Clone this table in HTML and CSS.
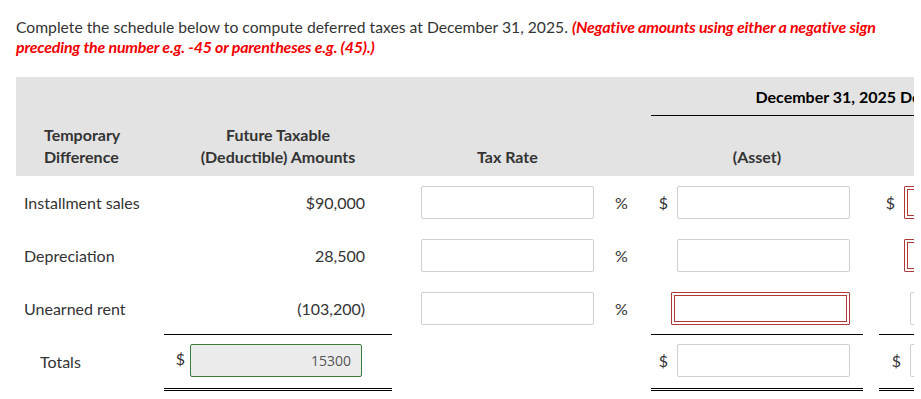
FILE: index.html
```html
<!DOCTYPE html>
<html>
<head>
<meta charset="utf-8">
<link rel="stylesheet" href="styles.css">
</head>
<body>
<div class="page">
  <p class="intro">Complete the schedule below to compute deferred taxes at December 31, 2025. <em class="note">(Negative amounts using either a negative sign preceding the number e.g. -45 or parentheses e.g. (45).)</em></p>
  <div class="scroller">
    <table class="sched">
      <colgroup>
        <col class="c-label"><col class="c-amt"><col class="c-rate"><col class="c-pct"><col class="c-money"><col class="c-gap"><col class="c-money2">
      </colgroup>
      <thead>
        <tr class="h1">
          <th></th><th></th><th></th><th></th>
          <th colspan="3" class="h-date">December 31, 2025 Deferred Tax</th>
        </tr>
        <tr class="h2">
          <th class="h-label">Temporary<br>Difference</th>
          <th class="h-center">Future Taxable<br>(Deductible) Amounts</th>
          <th class="h-rate">Tax Rate</th>
          <th></th>
          <th class="h-center">(Asset)</th>
          <th></th>
          <th class="h-center">Liability</th>
        </tr>
      </thead>
      <tbody>
        <tr>
          <td class="label">Installment sales</td>
          <td class="amt">$90,000</td>
          <td class="rate"><span class="box"></span></td>
          <td class="pct">%</td>
          <td class="money"><span class="cur">$</span><span class="box"></span></td>
          <td></td>
          <td class="money m2"><span class="cur">$</span><span class="box err"></span></td>
        </tr>
        <tr>
          <td class="label">Depreciation</td>
          <td class="amt">28,500</td>
          <td class="rate"><span class="box"></span></td>
          <td class="pct">%</td>
          <td class="money"><span class="box"></span></td>
          <td></td>
          <td class="money m2"><span class="box err"></span></td>
        </tr>
        <tr class="last">
          <td class="label">Unearned rent</td>
          <td class="amt rule">(103,200)</td>
          <td class="rate"><span class="box"></span></td>
          <td class="pct">%</td>
          <td class="money rule"><span class="box err"></span></td>
          <td></td>
          <td class="money m2 rule"><span class="box"></span></td>
        </tr>
        <tr class="totals">
          <td class="label tot">Totals</td>
          <td class="amt dbl"><div class="totcell"><span class="cur">$</span><span class="box filled">15300</span></div></td>
          <td></td>
          <td></td>
          <td class="money dbl"><span class="cur">$</span><span class="box"></span></td>
          <td></td>
          <td class="money m2 dbl"><span class="cur">$</span><span class="box"></span></td>
        </tr>
      </tbody>
    </table>
  </div>
</div>
</body>
</html>
```

FILE: styles.css
```css
html, body {
  margin: 0;
  padding: 0;
  background: #fff;
}
body {
  font-family: Lato, "Open Sans", sans-serif;
  font-size: 16px;
  color: #333;
}
.page {
  padding: 17px 7px 0 16px;
}
.intro {
  margin: 0;
  line-height: 19px;
  width: 880px;
  font-size: 15.7px;
}
.note {
  color: #f20000;
  font-weight: bold;
  font-style: italic;
  letter-spacing: -0.2px;
  font-size: 16px;
}
.scroller {
  margin-top: 20px;
  width: 898px;
  overflow: hidden;
}
.sched {
  border-collapse: separate;
  border-spacing: 0;
  table-layout: fixed;
  width: 1080px;
}
.c-label { width: 148px; }
.c-amt { width: 228px; }
.c-rate { width: 212px; }
.c-pct { width: 47px; }
.c-money { width: 212px; }
.c-gap { width: 16px; }
.c-money2 { width: 217px; }

thead th {
  background: #e3e3e3;
  font-weight: bold;
  color: #333;
  padding: 0;
}
.h1 th {
  height: 38px;
}
.h-date {
  color: #000;
  text-align: center;
  border-bottom: 1px solid #000;
  vertical-align: middle;
}
.h2 th {
  height: 60px;
  vertical-align: bottom;
  padding-bottom: 8px;
  line-height: 22px;
  box-sizing: border-box;
}
.h-label {
  text-align: left;
  padding-left: 28px !important;
}
.h-center {
  text-align: center;
}
.h-rate {
  text-align: left;
  padding-left: 85px !important;
}

tbody td {
  height: 53px;
  padding: 0;
  vertical-align: middle;
  box-sizing: border-box;
}
.label {
  padding-left: 8px !important;
}
.label.tot {
  padding-left: 24px !important;
}
.amt {
  text-align: right;
  padding-right: 27px !important;
}
.rate {
  padding-left: 29px !important;
}
.pct {
  padding-left: 11px !important;
}
.money {
  text-align: right;
  padding-right: 13px !important;
  white-space: nowrap;
}
.money .cur {
  margin-right: 9px;
}
.m2 {
  padding-right: 13px !important;
}
.m2 .cur {
  margin-right: 9px;
}
.rule {
  border-bottom: 1px solid #000;
}
.totals td {
  height: 56px;
  padding-bottom: 3px !important;
}
.dbl {
  border-bottom: 3px double #000;
}
.box {
  display: inline-block;
  vertical-align: middle;
  width: 173px;
  height: 33px;
  border: 1px solid #cfcfcf;
  border-radius: 2px;
  box-sizing: border-box;
  background: #fff;
}
.box.err {
  width: 179px;
  border: 1px solid #b03a3a;
  box-shadow: inset 0 0 0 2px #fff, inset 0 0 0 3px #b03a3a;
  border-radius: 1px;
}
.totcell {
  display: flex;
  align-items: center;
  justify-content: flex-end;
  padding-right: 3px;
}
.totcell .cur {
  margin-right: 5px;
  position: relative;
  top: -2px;
}
.box.filled {
  width: 172px;
  background: #ececec;
  border: 1px solid #3c7d3c;
  color: #555;
  font-size: 14px;
  line-height: 31px;
  text-align: right;
  padding-right: 10px;
  font-family: "Open Sans", Lato, sans-serif;
}
.money .cur, .amt .cur {
  vertical-align: middle;
}
```
